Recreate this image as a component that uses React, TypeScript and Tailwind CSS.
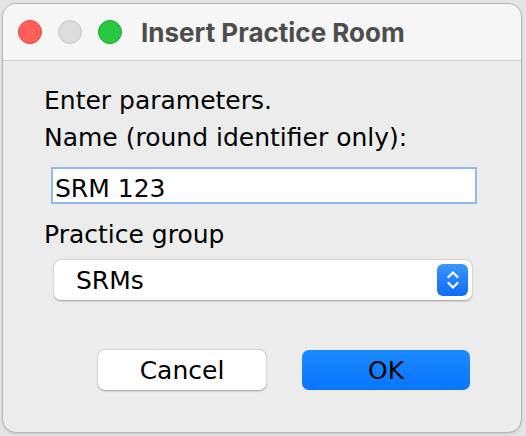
import React from 'react';

const body = { fontFamily: '"DejaVu Sans", "Lucida Grande", sans-serif' };

const Stepper = () => (
  <div className="w-[31px] h-[32px] rounded-[6px] bg-gradient-to-b from-[#3b95ff] to-[#0a6cf5] flex items-center justify-center">
    <svg width="14" height="22" viewBox="0 0 14 22" fill="none" stroke="white" strokeWidth="2.2" strokeLinecap="round" strokeLinejoin="round">
      <path d="M2.5 8 L7 3.5 L11.5 8" />
      <path d="M2.5 14 L7 18.5 L11.5 14" />
    </svg>
  </div>
);

export default function App() {
  return (
    <div className="w-[526px] h-[436px] bg-[#e4e4e4] pt-[3px] pl-[2px]">
      <div className="w-[520px] h-[430px] rounded-[14px] border border-[#b5b5b5] overflow-hidden bg-[#ececec] flex flex-col shadow-sm">
        {/* title bar */}
        <div className="h-[57px] shrink-0 bg-[#f6f6f6] border-b border-[#d0d0d0] flex items-center pl-[15px]">
          <div className="flex items-center gap-[16px]">
            <span className="w-[24px] h-[24px] rounded-full bg-[#ff5f57] border border-[#e2463f]" />
            <span className="w-[24px] h-[24px] rounded-full bg-[#dcdcdc] border border-[#c8c8c8]" />
            <span className="w-[24px] h-[24px] rounded-full bg-[#28c840] border border-[#1aab29]" />
          </div>
          <span className="ml-[19px] text-[26px] font-bold text-[#4d4d4d]" style={{ fontFamily: 'Inter, "Noto Sans", sans-serif' }}>
            Insert Practice Room
          </span>
        </div>

        {/* content */}
        <div className="flex flex-col pl-[41px] pt-[25px] text-[25px] text-black" style={body}>
          <p className="leading-[30px]">Enter parameters.</p>
          <p className="mt-[7px] leading-[30px]">Name (round identifier only):</p>
          <div className="mt-[14px] ml-[7px] w-[426px] h-[37px] bg-white border-2 border-[#8fb8f0] flex items-center pl-[2px] pt-[5px] leading-[29px]">
            SRM 123
          </div>
          <p className="mt-[16px] leading-[30px]">Practice group</p>
          <div className="mt-[10px] ml-[10px] w-[418px] h-[40px] bg-white rounded-[7px] shadow-[0_0.5px_2px_rgba(0,0,0,0.35)] flex items-center justify-between pl-[22px] pr-[4px]">
            <span className="leading-[29px]">SRMs</span>
            <Stepper />
          </div>

          <div className="mt-[50px] flex gap-[36px] pl-[54px]">
            <button className="w-[168px] h-[40px] bg-white rounded-[7px] shadow-[0_0.5px_2px_rgba(0,0,0,0.35)] text-black leading-[29px]">
              Cancel
            </button>
            <button className="w-[168px] h-[40px] rounded-[7px] bg-gradient-to-b from-[#1b8bff] to-[#0a74ff] text-black leading-[29px]">
              OK
            </button>
          </div>
        </div>
      </div>
    </div>
  );
}
